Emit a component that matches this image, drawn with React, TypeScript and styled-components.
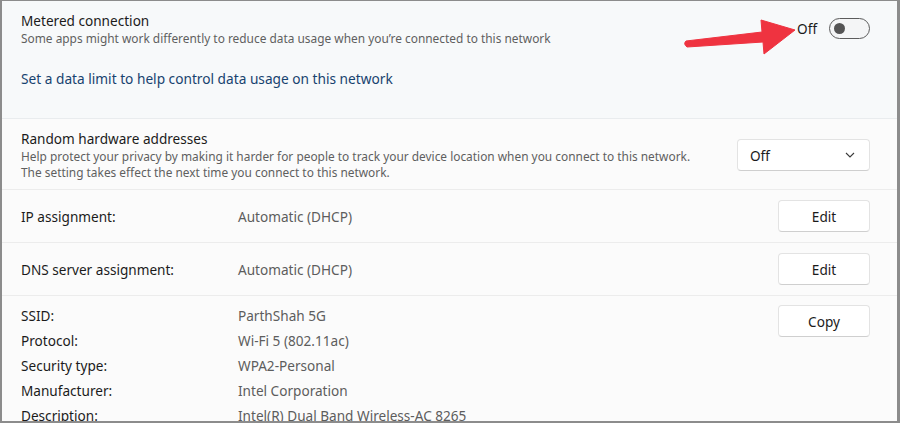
import React from 'react'
import styled, { createGlobalStyle } from 'styled-components'

const GlobalStyle = createGlobalStyle`
  html, body {
    margin: 0;
    padding: 0;
    background: #ffffff;
  }
  body {
    font-family: 'Segoe UI', 'Noto Sans', 'Open Sans', sans-serif;
    color: #1b1b1b;
  }
`

const Frame = styled.div`
  position: relative;
  box-sizing: border-box;
  width: 900px;
  height: 423px;
  overflow: hidden;
  border-style: solid;
  border-color: #8c8c8c;
  border-width: 1px 3px 2px 2px;
  background: #fbfbfb;
  display: flex;
  flex-direction: column;

  & > * {
    flex-shrink: 0;
  }
`

const MeteredCard = styled.section`
  background: #f7f9fa;
  padding: 11px 27px 0 19px;
  height: 118px;
  box-sizing: border-box;
  border-bottom: 1px solid #e9ecee;
`

const HeadRow = styled.div`
  display: flex;
  align-items: flex-start;
  justify-content: space-between;
`

const TextBlock = styled.div`
  display: flex;
  flex-direction: column;
`

const Title = styled.div`
  font-size: 13.6px;
  line-height: 18px;
  color: #1b1b1b;
`

const Desc = styled.div`
  font-size: 11.9px;
  line-height: 16px;
  color: #5f5f5f;
`

const ToggleWrap = styled.div`
  display: flex;
  align-items: center;
  gap: 12px;
  font-size: 13.6px;
  margin-top: 6px;
`

const Switch = styled.div`
  position: relative;
  box-sizing: border-box;
  width: 41px;
  height: 21px;
  border-radius: 11px;
  border: 1px solid #5c5c5c;
  background: #f4f5f6;

  &::after {
    content: '';
    position: absolute;
    left: 4px;
    top: 4px;
    width: 11px;
    height: 11px;
    border-radius: 50%;
    background: #545454;
  }
`

const DataLink = styled.div`
  margin-top: 23px;
  font-size: 13.7px;
  color: #17436f;
`

const Section = styled.div<{ $h: number }>`
  box-sizing: border-box;
  height: ${p => p.$h}px;
  padding: 0 27px 0 19px;
  border-bottom: 1px solid #ececec;
  display: flex;
`

const SettingRow = styled.div<{ $pt?: number }>`
  display: flex;
  align-items: center;
  justify-content: space-between;
  width: 100%;
  padding-top: ${p => p.$pt ?? 0}px;
`

const Dropdown = styled.div`
  box-sizing: border-box;
  width: 133px;
  height: 32px;
  display: flex;
  align-items: center;
  justify-content: space-between;
  padding: 0 14px 0 12px;
  background: #ffffff;
  border: 1px solid #e3e3e3;
  border-bottom-color: #cfcfcf;
  border-radius: 4px;
  font-size: 13.6px;
`

const Button = styled.div`
  box-sizing: border-box;
  width: 92px;
  height: 32px;
  display: flex;
  align-items: center;
  justify-content: center;
  background: #ffffff;
  border: 1px solid #e3e3e3;
  border-bottom-color: #cfcfcf;
  border-radius: 4px;
  font-size: 13.6px;
  color: #1b1b1b;
`

const Pair = styled.div`
  display: grid;
  grid-template-columns: 217px auto;
  font-size: 13.6px;
  line-height: 25px;
`

const Label = styled.span`
  color: #1b1b1b;
`

const Value = styled.span`
  color: #5d5d5d;
`

const Details = styled.div`
  padding: 7px 27px 0 19px;
  display: flex;
  justify-content: space-between;
  align-items: flex-start;
`

const DetailList = styled.div`
  display: flex;
  flex-direction: column;
`

const CopyButton = styled(Button)`
  margin-top: 2px;
`

const Arrow = styled.svg`
  position: absolute;
  left: 0;
  top: 0;
  pointer-events: none;
`

const Chevron = () => (
  <svg width="10" height="6" viewBox="0 0 10 6">
    <path d="M1 1 L5 5 L9 1" fill="none" stroke="#3a3a3a" strokeWidth="1.1" />
  </svg>
)

const details: [string, string][] = [
  ['SSID:', 'ParthShah 5G'],
  ['Protocol:', 'Wi-Fi 5 (802.11ac)'],
  ['Security type:', 'WPA2-Personal'],
  ['Manufacturer:', 'Intel Corporation'],
  ['Description:', 'Intel(R) Dual Band Wireless-AC 8265'],
]

export default function App() {
  return (
    <>
      <GlobalStyle />
      <Frame>
        <MeteredCard>
          <HeadRow>
            <TextBlock>
              <Title>Metered connection</Title>
              <Desc>Some apps might work differently to reduce data usage when you’re connected to this network</Desc>
            </TextBlock>
            <ToggleWrap>
              <span>Off</span>
              <Switch />
            </ToggleWrap>
          </HeadRow>
          <DataLink>Set a data limit to help control data usage on this network</DataLink>
        </MeteredCard>

        <Section $h={71}>
          <SettingRow $pt={2}>
            <TextBlock>
              <Title>Random hardware addresses</Title>
              <Desc>
                Help protect your privacy by making it harder for people to track your device location when you connect to this network.
                <br />
                The setting takes effect the next time you connect to this network.
              </Desc>
            </TextBlock>
            <Dropdown>
              <span>Off</span>
              <Chevron />
            </Dropdown>
          </SettingRow>
        </Section>

        <Section $h={53}>
          <SettingRow>
            <Pair>
              <Label>IP assignment:</Label>
              <Value>Automatic (DHCP)</Value>
            </Pair>
            <Button>Edit</Button>
          </SettingRow>
        </Section>

        <Section $h={53}>
          <SettingRow>
            <Pair>
              <Label>DNS server assignment:</Label>
              <Value>Automatic (DHCP)</Value>
            </Pair>
            <Button>Edit</Button>
          </SettingRow>
        </Section>

        <Details>
          <DetailList>
            {details.map(([k, v]) => (
              <Pair key={k}>
                <Label>{k}</Label>
                <Value>{v}</Value>
              </Pair>
            ))}
          </DetailList>
          <CopyButton>Copy</CopyButton>
        </Details>

        <Arrow width="900" height="423" viewBox="0 0 900 423">
          <path
            d="M684 40 L760 31 L759 19 L793 29 L762 53 L761 41 L685 46 Q681 43 684 40 Z"
            fill="#ef3340"
            stroke="#ef3340"
            strokeWidth="1"
            strokeLinejoin="round"
          />
        </Arrow>
      </Frame>
    </>
  )
}
